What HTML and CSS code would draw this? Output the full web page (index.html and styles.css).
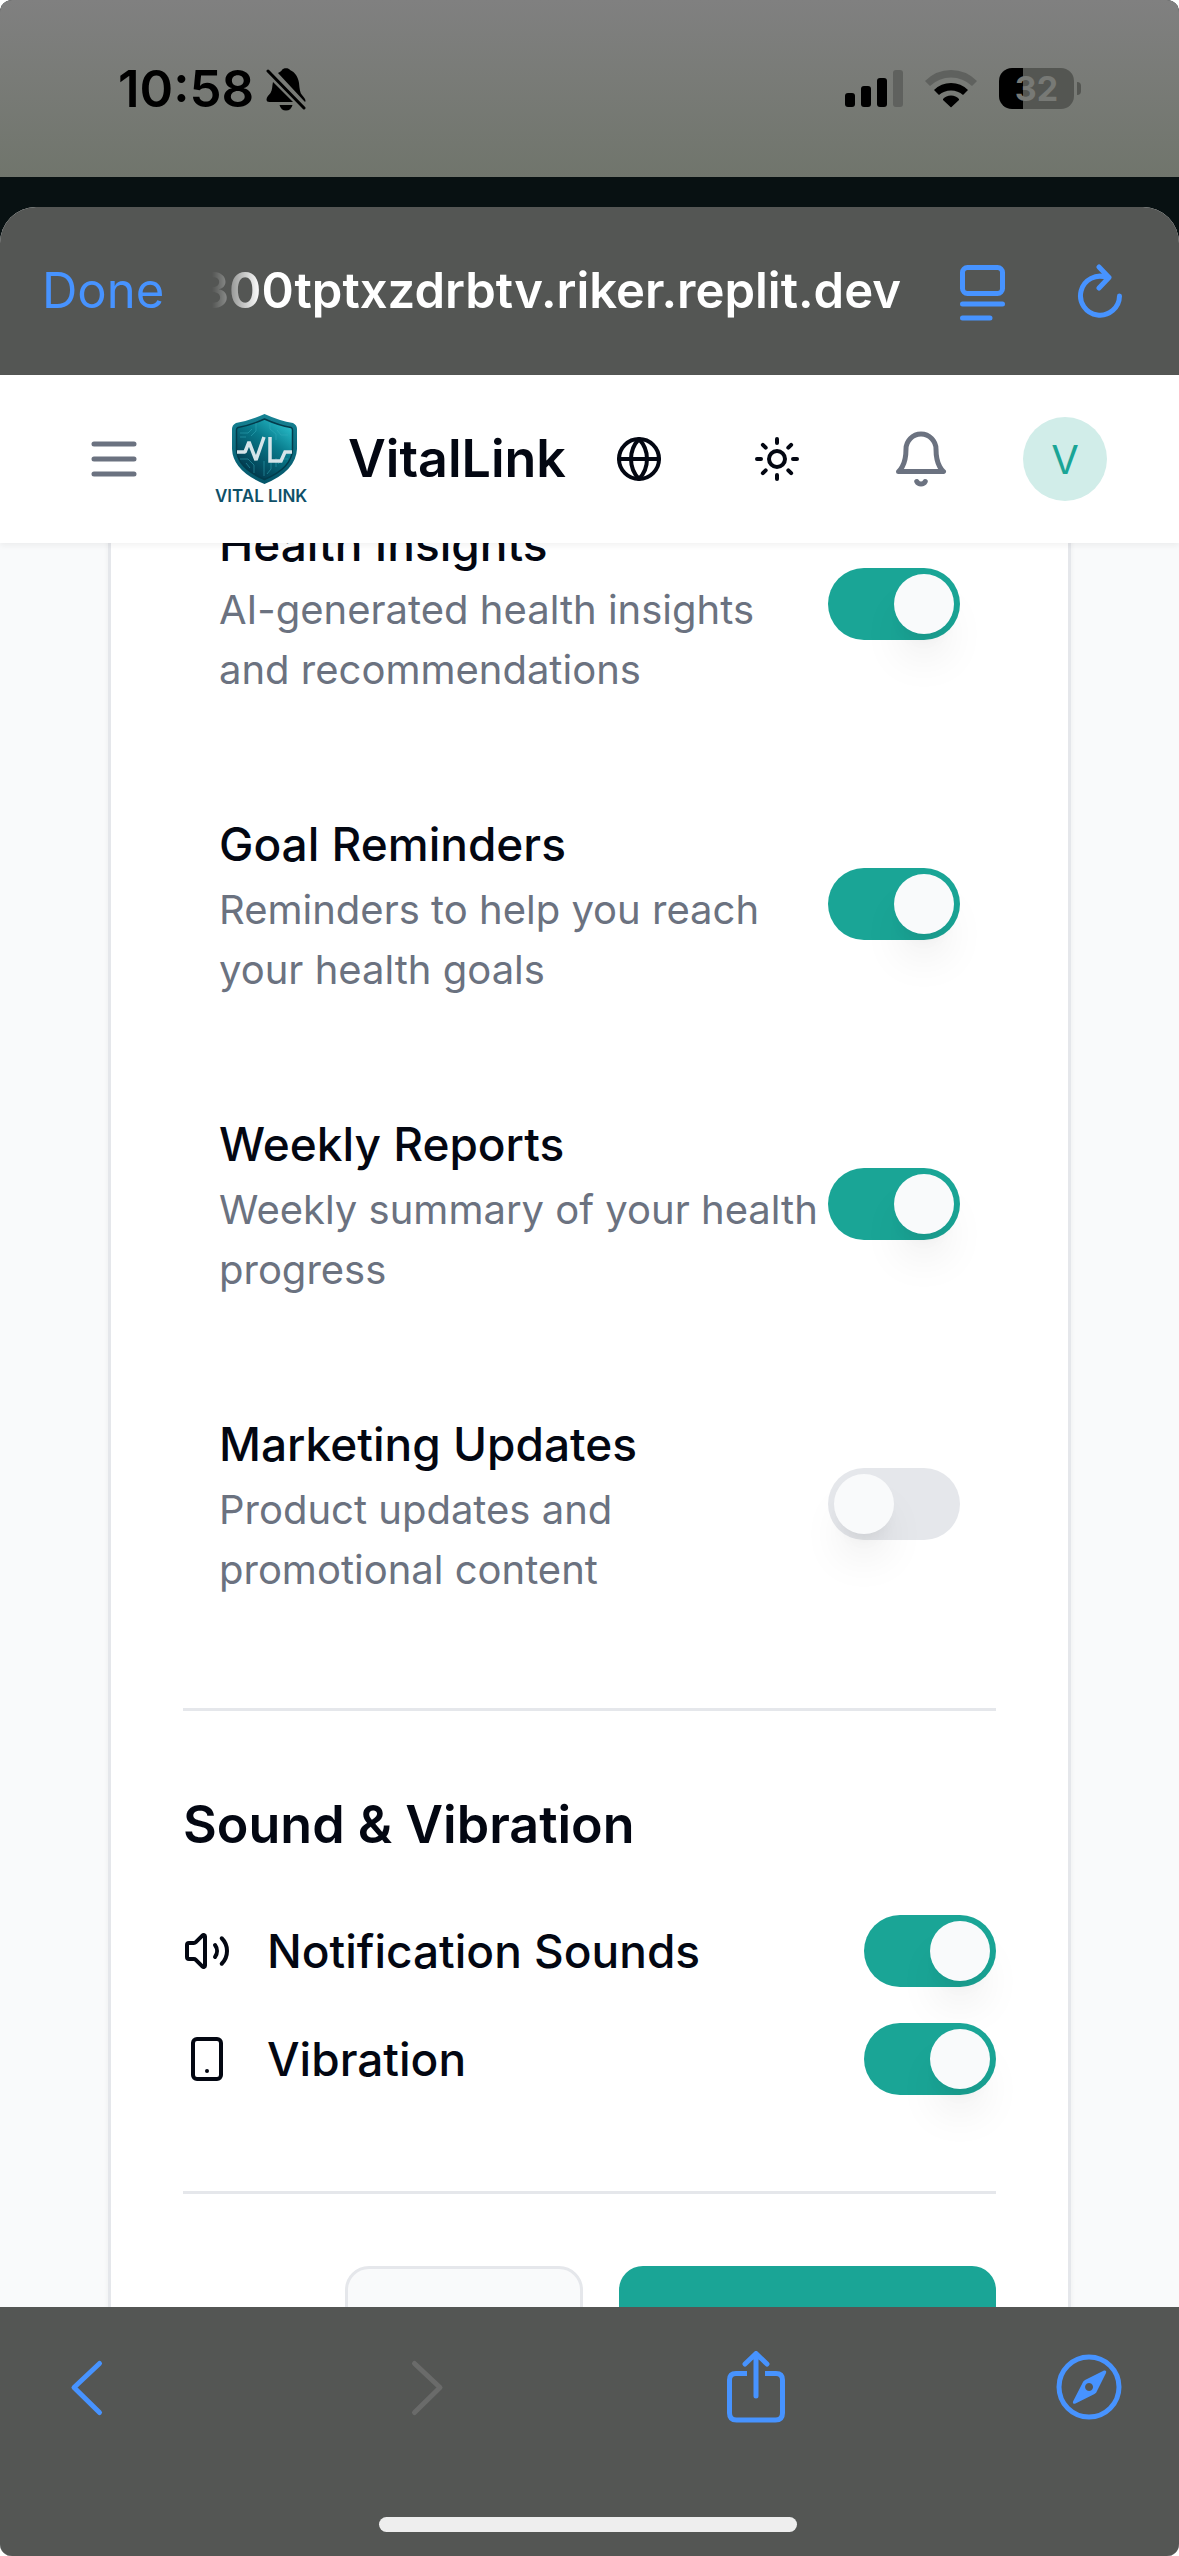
FILE: index.html
```html
<!DOCTYPE html>
<html lang="en">
<head>
<meta charset="utf-8">
<meta name="viewport" content="width=device-width, initial-scale=1">
<title>VitalLink</title>
<link rel="stylesheet" href="styles.css">
</head>
<body>
<div class="screen">
  <div class="status">
    <div class="status-left">
      <span class="clock">10:58</span>
      <svg class="mute" width="40" height="44" viewBox="0 0 40 44" aria-hidden="true">
        <path d="M12 6 C14 5 15.500 4 16 3 C17 .6 23 .6 24 3 C29 5 32 10 33 16 C33.600 22 34 26 36 28 C38.500 31 39.500 32 39.500 34 Q39.500 35 38.500 34.500 Z M7 15 L27 35 L3.500 35 Q.5 35 .5 32.500 C.5 30 3 28 4.500 26 C6.500 23 6 19 7 15 Z M13.500 38 H26.500 Q25 43.500 20 43.500 Q15 43.500 13.500 38 Z"/>
        <path d="M2 4 L38 41" stroke="#000" stroke-width="3" stroke-linecap="round"/>
      </svg>
    </div>
    <div class="status-right">
      <svg width="58" height="38" viewBox="0 0 58 38" aria-hidden="true">
        <rect x="0" y="23" width="10" height="14" rx="3"/>
        <rect x="16" y="16" width="10" height="21" rx="3"/>
        <rect x="32" y="8" width="10" height="29" rx="3"/>
        <rect x="48" y="0" width="10" height="37" rx="3" fill="#5f615e"/>
      </svg>
      <svg width="52" height="38" viewBox="0 0 52 38" aria-hidden="true">
        <path d="M0 11 Q11 0 26 0 Q41 0 52 11 L47 16 Q38 7.500 26 7.500 Q14 7.500 5 16 Z" fill="#5f615e"/>
        <path d="M9 20 Q16 13 26 13 Q36 13 43 20 L38 25 Q33 20.500 26 20.500 Q19 20.500 14 25 Z"/>
        <path d="M18 29 Q21 25.500 26 25.500 Q31 25.500 34 29 L34 30 L26.500 37 Q26 37.500 25.500 37 L18 30 Z"/>
      </svg>
      <div class="battery"><span class="battery-level">32</span></div>
    </div>
  </div>

  <div class="sheet">
    <div class="browser-bar">
      <button class="done" type="button">Done</button>
      <div class="address"><span>300tptxzdrbtv.riker.replit.dev</span></div>
      <button class="bare" type="button" aria-label="Reader view">
        <svg width="48" height="60" viewBox="0 0 48 60" class="ios"><rect x="3.500" y="6.500" width="40" height="26" rx="5"/><path d="M3.500 43 H43.500 M3.500 57 H31"/></svg>
      </button>
      <button class="bare" type="button" aria-label="Reload">
        <svg width="48" height="60" viewBox="0 0 48 60" class="ios"><path d="M30 16.500 A19.500 19.500 0 1 0 42.500 35 M22 6 L32 16.500 L22 27"/></svg>
      </button>
    </div>

    <header class="app-bar">
      <button class="bare menu" type="button" aria-label="Menu">
        <svg class="line" width="60" height="60" viewBox="0 0 24 24"><path d="M4 6h16M4 12h16M4 18h16"/></svg>
      </button>
      <svg class="logo" width="108" height="96" viewBox="0 0 108 96" role="img" aria-label="Vital Link">
        <defs>
          <linearGradient id="face" x1="1" y1="0" x2="0.300" y2="1"><stop offset="0" stop-color="#30cdd8"/><stop offset=".45" stop-color="#087a8b"/><stop offset="1" stop-color="#013449"/></linearGradient>
          <linearGradient id="rim" x1="0" y1="0" x2="0" y2="1"><stop offset="0" stop-color="#168394"/><stop offset="1" stop-color="#04566a"/></linearGradient>
        </defs>
        <path d="M60.500 3 Q45 10 32 12 Q28 14 28 18 V38 Q29 60 60.500 73 Q92 60 93 38 V18 Q93 14 89 12 Q76 10 60.500 3 Z" fill="url(#rim)"/>
        <path d="M60.500 8 Q46 14.500 34 16.500 Q32.500 17 32.500 19 V38 Q33 57 60.500 68.500 Q88 57 88.500 38 V19 Q88.500 17 87 16.500 Q75 14.500 60.500 8 Z" fill="url(#face)" stroke="#033c4c" stroke-width="1.500"/>
        <path d="M36 22h8l4-4M36 26h6M36 48h8l6 6v8M52 12v8l-5 5M66 12v6l6 5v6M84 24h-7l-4-5M60 50v15M67 50v8l-4 5M72 47v9M84 48h-6l-4 5M42 52l4 5" fill="none" stroke="#35aebb" stroke-width="1" opacity=".5"/>
        <path d="M33 41 H41 L45 31 L52 49 L60 26" fill="none" stroke="#d5e4e9" stroke-width="3.500" stroke-linejoin="bevel"/>
        <path d="M66 26 V50 H77 L81 41 H88" fill="none" stroke="#d5e4e9" stroke-width="3.500"/>
        <text x="11" y="91" class="logo-text">VITAL LINK</text>
      </svg>
      <span class="brand">VitalLink</span>
      <nav class="actions" aria-label="Account">
        <button class="bare dark" type="button" aria-label="Language">
          <svg class="line" width="48" height="48" viewBox="0 0 24 24"><circle cx="12" cy="12" r="10"/><path d="M12 2a14.500 14.500 0 0 0 0 20 14.500 14.500 0 0 0 0-20M2 12h20"/></svg>
        </button>
        <button class="bare dark" type="button" aria-label="Theme">
          <svg class="line" width="48" height="48" viewBox="0 0 24 24"><circle cx="12" cy="12" r="4"/><path d="M12 2v2M12 20v2M4.930 4.930l1.410 1.410M17.660 17.660l1.410 1.410M2 12h2M20 12h2M6.340 17.660l-1.410 1.410M19.070 4.930l-1.410 1.410"/></svg>
        </button>
        <button class="bare" type="button" aria-label="Notifications">
          <svg class="line" width="60" height="60" viewBox="0 0 24 24"><path d="M6 8a6 6 0 0 1 12 0c0 7 3 9 3 9H3s3-2 3-9M10.300 21a1.940 1.940 0 0 0 3.400 0"/></svg>
        </button>
        <button class="avatar" type="button">V</button>
      </nav>
    </header>

    <main class="content">
      <section class="card">
        <div class="list">
          <div class="item">
            <label class="item-text" for="insights"><span class="title">Health Insights</span><span class="desc">AI-generated health insights and recommendations</span></label>
            <input class="switch" type="checkbox" role="switch" id="insights" checked>
          </div>
          <div class="item">
            <label class="item-text" for="goals"><span class="title">Goal Reminders</span><span class="desc">Reminders to help you reach your health goals</span></label>
            <input class="switch" type="checkbox" role="switch" id="goals" checked>
          </div>
          <div class="item">
            <label class="item-text" for="weekly"><span class="title">Weekly Reports</span><span class="desc">Weekly summary of your health progress</span></label>
            <input class="switch" type="checkbox" role="switch" id="weekly" checked>
          </div>
          <div class="item">
            <label class="item-text" for="marketing"><span class="title">Marketing Updates</span><span class="desc">Product updates and promotional content</span></label>
            <input class="switch" type="checkbox" role="switch" id="marketing">
          </div>
        </div>
        <hr class="rule">
        <div class="sound">
          <h2>Sound &amp; Vibration</h2>
          <div class="row">
            <label for="sounds">
              <svg class="line" width="48" height="48" viewBox="0 0 24 24"><path d="M11 4.702a.705.705 0 0 0-1.203-.498L6.413 7.587A1.400 1.400 0 0 1 5.416 8H3a1 1 0 0 0-1 1v6a1 1 0 0 0 1 1h2.416a1.400 1.400 0 0 1 .997.413l3.383 3.384A.705.705 0 0 0 11 19.298zM16 9a5 5 0 0 1 0 6M19.364 18.364a9 9 0 0 0 0-12.728"/></svg>
              Notification Sounds
            </label>
            <input class="switch" type="checkbox" role="switch" id="sounds" checked>
          </div>
          <div class="row">
            <label for="vibration">
              <svg class="line" width="48" height="48" viewBox="0 0 24 24"><rect x="5" y="2" width="14" height="20" rx="2"/><path d="M12 18h.010"/></svg>
              Vibration
            </label>
            <input class="switch" type="checkbox" role="switch" id="vibration" checked>
          </div>
        </div>
        <hr class="rule">
        <div class="buttons">
          <button class="btn" type="button" aria-label="Reset"></button>
          <button class="btn primary" type="button" aria-label="Save changes"></button>
        </div>
      </section>
    </main>

    <footer class="toolbar">
      <div class="tools">
        <button class="bare" type="button" aria-label="Back">
          <svg width="72" height="72" viewBox="0 0 72 72" class="ios"><path d="M48.500 12.500 L23 36.500 L48.500 61.500"/></svg>
        </button>
        <button class="bare" type="button" aria-label="Forward" disabled>
          <svg width="72" height="72" viewBox="0 0 72 72" class="ios"><path d="M29.500 12.500 L55 36.500 L29.500 61.500"/></svg>
        </button>
        <button class="bare" type="button" aria-label="Share">
          <svg width="72" height="72" viewBox="0 0 72 72" class="ios"><path d="M28 22.500 H17 Q10.500 22.500 10.500 29 V62 Q10.500 69 17.500 69 H56.500 Q63.500 69 63.500 62 V29 Q63.500 22.500 57 22.500 H46" stroke-linecap="butt"/><path d="M37 45 V3 M26 13 L37 2.500 L48 13"/></svg>
        </button>
        <button class="bare" type="button" aria-label="Open in browser">
          <svg width="72" height="72" viewBox="0 0 72 72" class="ios"><circle cx="36" cy="36" r="30"/><path class="fill" fill-rule="evenodd" d="M51 19.500 Q54 19 53 22 L44 40 Q43.500 42 41.500 43 L22.500 52.500 Q19 53.500 20 50.500 L29 33 Q30 30 32 29 Z M36 32 A4 4 0 1 0 36.100 32 Z"/></svg>
        </button>
      </div>
      <div class="home"></div>
    </footer>
  </div>
</div>
</body>
</html>
```
FILE: styles.css
```css
* { box-sizing: border-box; }

body {
  margin: 0;
  background: #fff;
  color: #030712;
  font-family: Inter, "Liberation Sans", sans-serif;
}

button, input { font: inherit; color: inherit; }

.screen {
  display: flex;
  flex-direction: column;
  height: 100vh;
  border-radius: 12px;
  overflow: hidden;
  background: #081112;
}

/* status bar */
.status {
  display: flex;
  justify-content: space-between;
  align-items: center;
  height: 177px;
  padding: 0 98px 0 118px;
  background: linear-gradient(#808080, #70756c);
}

.status-left, .status-right { display: flex; align-items: center; }
.status-left { gap: 12px; }
.status-right { gap: 22px; }

.clock { font-size: 51px; font-weight: 600; line-height: 60px; color: #000; }

.battery {
  position: relative;
  width: 75px;
  height: 41px;
  margin-right: 7px;
  border-radius: 13px;
  background: linear-gradient(90deg, #000 24px, #545652 24px);
  text-align: center;
}

.battery::after {
  content: "";
  position: absolute;
  left: 78px;
  top: 14px;
  width: 4px;
  height: 13px;
  border-radius: 0 4px 4px 0;
  background: #545652;
}

.battery-level { font-size: 34px; font-weight: 700; line-height: 41px; color: #777975; }

/* in-app browser */
.sheet {
  flex: 1;
  min-height: 0;
  display: flex;
  flex-direction: column;
  margin-top: 30px;
  border-radius: 36px 36px 0 0;
  overflow: hidden;
  background: #f9fafb;
}

.browser-bar {
  display: flex;
  align-items: center;
  height: 168px;
  flex: none;
  padding: 0 54px 0 42px;
  background: #545654;
}

.bare, .done {
  padding: 0;
  border: 0;
  background: none;
  color: #6b7280;
}

.bare svg { display: block; }

.done { font-size: 49px; line-height: 60px; color: #4793ff; }

.address {
  flex: 1;
  min-width: 0;
  display: flex;
  justify-content: flex-end;
  margin: 0 58px 0 48px;
  overflow: hidden;
  font-size: 49px;
  font-weight: 600;
  line-height: 66px;
  color: #fff;
  -webkit-mask-image: linear-gradient(90deg, transparent, #000 48px);
  mask-image: linear-gradient(90deg, transparent, #000 48px);
}

.browser-bar .bare + .bare { margin-left: 70px; }

.ios {
  fill: none;
  stroke: #4793ff;
  stroke-width: 5;
  stroke-linecap: round;
  stroke-linejoin: round;
}

.ios .fill { fill: #4793ff; stroke: none; }
.bare:disabled .ios { stroke: #6a6b6a; }

.line {
  flex: none;
  fill: none;
  stroke: currentColor;
  stroke-width: 2;
  stroke-linecap: round;
  stroke-linejoin: round;
}

/* app header */
.app-bar {
  position: relative;
  z-index: 1;
  display: flex;
  align-items: center;
  flex: none;
  height: 168px;
  padding: 0 72px;
  background: #fff;
  box-shadow: 0 3px 6px rgba(0, 0, 0, .05);
}

.menu { padding: 0 12px; }
.logo { margin: 0 36px 0 48px; flex: none; }
.logo-text { font-size: 17px; font-weight: 600; fill: #0f5068; }
.brand { font-size: 52px; font-weight: 600; line-height: 84px; }

.actions {
  display: flex;
  align-items: center;
  gap: 54px;
  margin-left: auto;
}

.actions .bare { padding: 0 18px; }
.actions .dark { color: #030712; }

.avatar {
  width: 84px;
  height: 84px;
  padding: 0;
  border: 0;
  border-radius: 50%;
  background: #d1ede9;
  color: #1aa596;
  font-size: 40px;
}

/* settings, scrolled part of the way down */
.content {
  flex: 1;
  min-height: 0;
  overflow: hidden;
  padding: 0 108px;
}

.card {
  margin-top: -71px;
  padding: 0 72px;
  border: 3px solid #e5e7eb;
  border-top: 0;
  background: #fff;
  box-shadow: 0 3px 6px rgba(0, 0, 0, .05);
}

.list { display: flex; flex-direction: column; gap: 36px; }
.item { display: flex; align-items: center; padding: 36px; }
.item-text { flex: 1; }
.title, .desc { display: block; }
.title { font-size: 46px; font-weight: 500; line-height: 72px; }
.desc { font-size: 40px; line-height: 60px; color: #6b7280; }

.switch {
  appearance: none;
  flex: none;
  display: flex;
  width: 132px;
  height: 72px;
  margin: 0;
  padding: 6px;
  border-radius: 36px;
  background: #e5e7eb;
}

.switch::before {
  content: "";
  width: 60px;
  height: 60px;
  border-radius: 50%;
  background: #f9fafb;
  box-shadow: 0 30px 45px -9px rgba(0, 0, 0, .1), 0 12px 18px -12px rgba(0, 0, 0, .1);
}

.switch:checked { justify-content: flex-end; background: #1aa596; }

.rule { height: 3px; margin: 72px 0; border: 0; background: #e5e7eb; }

.sound {
  display: flex;
  flex-direction: column;
  gap: 36px;
  padding-bottom: 24px;
}

h2 { margin: 0 0 12px; font-size: 52px; font-weight: 600; line-height: 84px; }

.row { display: flex; justify-content: space-between; align-items: center; }

.row label {
  display: flex;
  align-items: center;
  gap: 36px;
  font-size: 46px;
  font-weight: 500;
  line-height: 72px;
}

.buttons { display: flex; justify-content: flex-end; gap: 36px; }

.btn {
  width: 238px;
  height: 120px;
  border: 3px solid #e5e7eb;
  border-radius: 24px;
  background: #f9fafb;
}

.primary { width: 377px; border: 0; background: #1aa596; }

/* browser toolbar */
.toolbar {
  display: flex;
  flex-direction: column;
  align-items: center;
  justify-content: space-between;
  flex: none;
  height: 249px;
  padding: 44px 54px 24px 51px;
  background: #545654;
}

.tools { display: flex; justify-content: space-between; width: 100%; }
.home { width: 39%; height: 15px; border-radius: 8px; background: #eee; }
```
